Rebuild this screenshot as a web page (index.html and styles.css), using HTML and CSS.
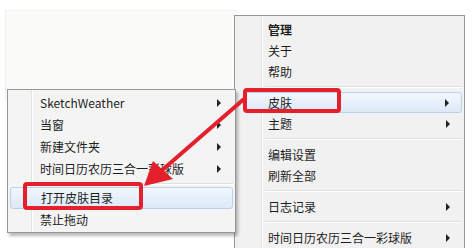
FILE: index.html
```html
<!DOCTYPE html>
<html lang="zh">
<head>
<meta charset="utf-8">
<link rel="stylesheet" href="styles.css">
</head>
<body>
<div class="stage">
  <div class="backdrop"></div>

  <div class="menu menu-main">
    <div class="item bold">管理</div>
    <div class="item">关于</div>
    <div class="item">帮助</div>
    <div class="sep"></div>
    <div class="item hl sub">皮肤</div>
    <div class="item sub">主题</div>
    <div class="sep"></div>
    <div class="item">编辑设置</div>
    <div class="item">刷新全部</div>
    <div class="sep"></div>
    <div class="item sub">日志记录</div>
    <div class="sep"></div>
    <div class="item sub">时间日历农历三合一彩球版</div>
  </div>

  <div class="menu menu-skin">
    <div class="item sub">SketchWeather</div>
    <div class="item sub">当窗</div>
    <div class="item sub">新建文件夹</div>
    <div class="item sub">时间日历农历三合一彩球版</div>
    <div class="sep"></div>
    <div class="item hl">打开皮肤目录</div>
    <div class="item">禁止拖动</div>
  </div>

  <svg class="marks" width="476" height="248" viewBox="0 0 476 248">
    <rect x="245" y="90" width="94" height="21" rx="2" fill="none" stroke="#e3202b" stroke-width="4"/>
    <rect x="25" y="184" width="116" height="24" rx="2" fill="none" stroke="#e3202b" stroke-width="4"/>
    <line x1="244" y1="99" x2="160" y2="172" stroke="#e3202b" stroke-width="4"/>
    <polygon points="144,186 153,161 173,179" fill="#e3202b"/>
  </svg>
</div>
</body>
</html>
```

FILE: styles.css
```css
html, body {
  margin: 0;
  padding: 0;
  background: #ffffff;
}

.stage {
  position: relative;
  width: 476px;
  height: 248px;
  overflow: hidden;
  font-family: "Noto Sans CJK SC", "Noto Sans", sans-serif;
  font-size: 12px;
  color: #1e1e1e;
}

.backdrop {
  position: absolute;
  left: 5px;
  top: 10px;
  width: 232px;
  height: 90px;
  background: #fbfbfa;
  border-left: 1px solid #f0f0ee;
  border-top: 1px solid #f3f3f1;
}

.menu {
  position: absolute;
  box-sizing: border-box;
  border: 1px solid #979797;
  display: flex;
  flex-direction: column;
}

.menu-main {
  left: 234px;
  top: 15px;
  width: 231px;
  height: 250px;
  padding: 3px 2px;
  background:
    linear-gradient(to right, transparent 26px, #e2e3e3 26px, #e2e3e3 27px, #ffffff 27px, #ffffff 28px, transparent 28px),
    #f1f1f1;
}

.menu-skin {
  left: 7px;
  top: 89px;
  width: 229px;
  height: 144px;
  padding: 2px 2px 1px;
  background:
    linear-gradient(to right, transparent 23px, #e2e3e3 23px, #e2e3e3 24px, #ffffff 24px, #ffffff 25px, transparent 25px),
    #f4f4f4;
  box-shadow: 2px 3px 3px rgba(0, 0, 0, 0.28);
}

.item {
  position: relative;
  display: flex;
  align-items: center;
  box-sizing: border-box;
  height: 21px;
  padding-left: 31px;
  line-height: 1;
  white-space: nowrap;
}

.menu-skin .item {
  height: 22px;
  padding-left: 30px;
}

.bold {
  font-weight: bold;
}

.sub::after {
  content: "";
  position: absolute;
  right: 12px;
  top: 50%;
  margin-top: -4px;
  border-left: 4px solid #222;
  border-top: 4px solid transparent;
  border-bottom: 4px solid transparent;
}

.hl {
  border: 1px solid #b9d1ea;
  border-radius: 3px;
  background: linear-gradient(#f2f7fd, #dce9f8);
}

.menu-main .hl {
  margin-left: 7px;
  padding-left: 23px;
}

.sep {
  height: 10px;
  margin-left: 28px;
  background: linear-gradient(to bottom, transparent 4px, #e0e0e0 4px, #e0e0e0 5px, #ffffff 5px, #ffffff 6px, transparent 6px);
}

.menu-skin .sep {
  height: 7px;
  margin-left: 25px;
  background: linear-gradient(to bottom, transparent 3px, #e0e0e0 3px, #e0e0e0 4px, #ffffff 4px, #ffffff 5px, transparent 5px);
}

.marks {
  position: absolute;
  left: 0;
  top: 0;
}
```
